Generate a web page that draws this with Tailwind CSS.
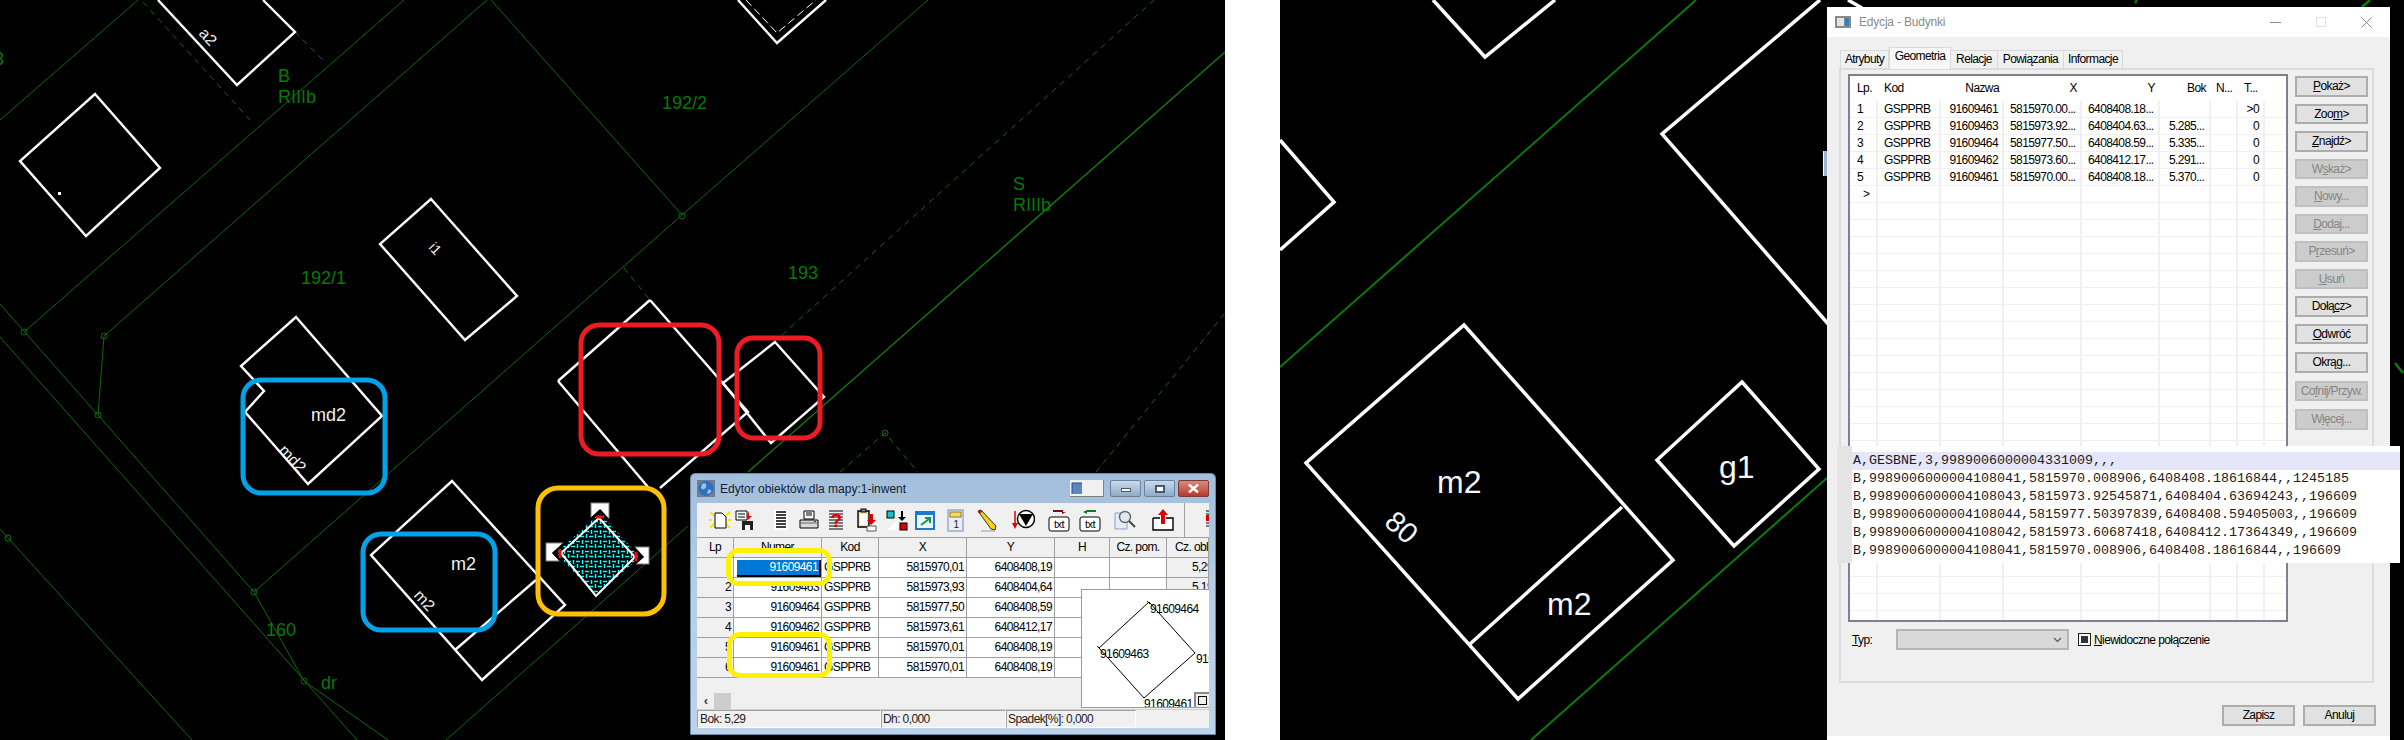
<!DOCTYPE html>
<html lang="en">
<head>
<meta charset="UTF-8" />
<title>Edycja geometrii</title>
<script src="https://cdn.jsdelivr.net/npm/@tailwindcss/browser@4"></script>
</head>
<body class="bg-white overflow-hidden">
<div class="flex w-[2404px] h-[740px] bg-white overflow-hidden font-['Liberation_Sans',sans-serif]">

  <!-- left map -->
  <div class="relative w-[1225px] h-[740px] bg-black shrink-0 overflow-hidden">
    <svg width="1225" height="740" viewBox="0 0 1225 740" class="block" font-family="Liberation Sans, sans-serif">
      <defs>
        <pattern id="hatch" width="9" height="10" patternUnits="userSpaceOnUse">
          <rect width="9" height="10" fill="#000"/>
          <path d="M0 1.5h4M6.5 0v4M4 6.5h4M1.5 4v4" stroke="#00ffff" stroke-width="1.5"/>
        </pattern>
      </defs>
      <g fill="none" stroke="#0a6a0a" stroke-width="1">
        <path d="M0 120L138 0M24 332L404 0M104 336L487 0M104 336L98 415M0 304L254 592L304 681L388 740M0 337L357 740M254 592L682 215M491 0L682 215L928 0M0 529L8 538L192 740M446 740L688 526"/>
        <path d="M748 472L1225 52" stroke="#0f7a0f" stroke-width="1.4"/>
        <path stroke-dasharray="6 5" d="M143 2L250 120M295 32L325 62M624 268L650 300M782 335L1154 0M840 472L885 433L918 472M1096 472L1225 313"/>
        <circle cx="24" cy="332" r="3"/><circle cx="104" cy="336" r="3"/><circle cx="98" cy="415" r="3"/><circle cx="254" cy="592" r="3"/>
        <circle cx="304" cy="681" r="3"/><circle cx="682" cy="216" r="3"/><circle cx="8" cy="538" r="3"/><circle cx="885" cy="433" r="3"/>
      </g>
      <g fill="none" stroke="#fff" stroke-width="2.4">
        <path d="M158 0L237 85L295 32L263 0"/>
        <path d="M95 94L160 168L86 236L20 161Z"/>
        <path d="M431 199L517 296L465 340L380 244Z"/>
        <path d="M296 317L382 416L308 484L245 412L264 391L241 366Z"/>
        <path d="M452 481L565 605L482 680L371 555ZM455 650L536 580"/>
        <path d="M650 300L748 412L660 488M558 381L650 300M558 381L648 487"/>
        <path d="M775 342L824 397L771 443L723 383Z"/>
        <path d="M738 0L777 43L826 0"/>
        <path d="M746 0L777 33L816 0" stroke-width="1" stroke-dasharray="8 4"/>
      </g>
      <rect x="58" y="192" width="3" height="3" fill="#fff"/>
      <g fill="#057a05" font-size="18">
        <text x="-6" y="65">3</text>
        <text x="278" y="82">B</text>
        <text x="278" y="103">RIIIb</text>
        <text x="662" y="109">192/2</text>
        <text x="301" y="284">192/1</text>
        <text x="788" y="279">193</text>
        <text x="1013" y="190">S</text>
        <text x="1013" y="211">RIIIb</text>
        <text x="266" y="636">160</text>
        <text x="321" y="689">dr</text>
      </g>
      <g fill="#f0f0f0" font-size="18">
        <text x="311" y="421">md2</text>
        <text x="451" y="570">m2</text>
        <text font-size="16" transform="translate(278 451) rotate(47)">md2</text>
        <text font-size="16" transform="translate(413 596) rotate(47)">m2</text>
        <text font-size="14" transform="translate(428 248) rotate(47)">i1</text>
        <text font-size="16" transform="translate(198 34) rotate(47)">a2</text>
      </g>
      <!-- selected object -->
      <rect x="591" y="503" width="18" height="17" fill="#fff" stroke="#808080"/>
      <rect x="546" y="543" width="18" height="18" fill="#fff" stroke="#808080"/>
      <rect x="632" y="547" width="17" height="17" fill="#fff" stroke="#808080"/>
      <path d="M600 511L642 557L596 598L554 553Z" fill="url(#hatch)" stroke="#000" stroke-width="3"/>
      <path d="M599 518L635 557L596 596L561 553Z" fill="none" stroke="#fff" stroke-width="2"/>
      <path d="M596 517L604 517M560 549L560 558M636 552L636 561" stroke="#e81010" stroke-width="3"/>
      <!-- hand-drawn markers -->
      <g fill="none" stroke-width="5">
        <rect x="243" y="380" width="142" height="113" rx="18" stroke="#00a2e8"/>
        <rect x="363" y="534" width="132" height="96" rx="18" stroke="#00a2e8"/>
        <rect x="581" y="325" width="138" height="129" rx="18" stroke="#ed1c24"/>
        <rect x="737" y="338" width="83" height="100" rx="16" stroke="#ed1c24"/>
        <rect x="538" y="488" width="126" height="126" rx="20" stroke="#ffc000"/>
      </g>
    </svg>

    <!-- editor window -->
    <div class="absolute left-[690px] top-[473px] w-[526px] h-[262px] rounded-t-[5px] border border-[#6d8aa6] bg-gradient-to-b from-[#a3bedb] via-[#b7cfe6] to-[#bcd3ea] px-[6px] pb-[6px] flex flex-col text-[12px] tracking-[-0.6px] text-black">
      <div class="h-[29px] shrink-0 flex items-center relative">
        <svg width="18" height="17" viewBox="0 0 18 17" class="mr-[5px]">
          <rect width="18" height="17" fill="#6b7f99"/>
          <circle cx="9" cy="8.5" r="7.5" fill="#2f6fc0"/>
          <path d="M5 4c3-2 5 0 4 3s-4 3-5 1zM11 10c2-1 4 0 3 2s-3 2-4 1z" fill="#9ac4ee"/>
        </svg>
        <span class="text-[12px] tracking-normal text-[#10202e]">Edytor obiektów dla mapy:1-inwent</span>
        <div class="ml-auto flex gap-[3px] items-center">
          <div class="w-[34px] h-[17px] mr-[3px] bg-[#f0f0f0] border-r border-b border-[#808080] flex items-center pl-[1px]">
            <svg width="12" height="13" viewBox="0 0 12 13"><rect x="1" y="1" width="10" height="11" fill="#5f86b8"/><path d="M1 12V1h10" fill="none" stroke="#1e4f96"/></svg>
          </div>
          <div class="w-[31px] h-[17px] rounded-[2px] border border-[#6d8099] bg-gradient-to-b from-[#c9dbec] to-[#8fabc8] flex items-center justify-center"><div class="w-[10px] h-[4px] mt-[3px] bg-white border border-[#4b5a6b]"></div></div>
          <div class="w-[31px] h-[17px] rounded-[2px] border border-[#6d8099] bg-gradient-to-b from-[#c9dbec] to-[#8fabc8] flex items-center justify-center"><div class="w-[10px] h-[8px] bg-white border-2 border-[#4b5a6b]"></div></div>
          <div class="w-[31px] h-[17px] rounded-[2px] border border-[#7a3b36] bg-gradient-to-b from-[#d98a7e] to-[#b53a2a] flex items-center justify-center"><svg width="11" height="9" viewBox="0 0 11 9"><path d="M1 0.5L10 8.5M10 0.5L1 8.5" stroke="#fff" stroke-width="2.4"/></svg></div>
        </div>
      </div>

      <div class="flex-1 flex flex-col bg-[#f0f0f0] relative overflow-hidden">
        <!-- toolbar -->
        <div class="h-[34px] shrink-0 flex items-center pl-[11px] relative">
          <svg width="24" height="24" viewBox="0 0 24 24"><path d="M2 4l4 4M22 4l-4 4M2 20l4-4M22 20l-4-4M1 12h3M20 12h3" stroke="#f7e400" stroke-width="2"/><path d="M7 5h7l4 4v11H7z" fill="#fff" stroke="#000"/></svg>
          <svg width="24" height="24" viewBox="0 0 24 24" class="ml-[1px]"><path d="M3 3h11v9H3z" fill="#fff" stroke="#000"/><path d="M5 6h7M5 9h7" stroke="#000"/><path d="M16 3v5h3l-4 4-1-4" fill="#e00000"/><path d="M9 13h11v9H9z" fill="#222"/><rect x="12" y="17" width="5" height="5" fill="#fff"/></svg>
          <svg width="24" height="24" viewBox="0 0 24 24" class="ml-[12px]"><rect x="5" y="2" width="14" height="20" fill="#fff"/><path d="M7 4h10M7 7h10M7 10h10M7 13h10M7 16h10M7 19h10" stroke="#000" stroke-width="1.4"/></svg>
          <svg width="24" height="24" viewBox="0 0 24 24" class="ml-[4px]"><path d="M7 3h10v8H7z" fill="#fff" stroke="#000"/><path d="M9 5h6M9 7h6" stroke="#000"/><path d="M3 12h18v8H3z" fill="#d8d8d8" stroke="#000"/><path d="M4 15h16" stroke="#666"/><rect x="17" y="13" width="2" height="1" fill="#e00000"/></svg>
          <svg width="24" height="24" viewBox="0 0 24 24" class="ml-[3px]"><path d="M5 3h14M5 6h14M5 9h14M5 12h14M5 15h14M5 18h14M5 21h14" stroke="#000"/><text x="12" y="19" text-anchor="middle" font-family="Liberation Sans" font-size="19" font-weight="700" fill="#e00000">?</text></svg>
          <svg width="24" height="24" viewBox="0 0 24 24" class="ml-[7px]"><path d="M3 3h11v16H3z" fill="#f4e68a" stroke="#000" stroke-width="1.4"/><rect x="5" y="6" width="7" height="11" fill="#fff"/><rect x="6" y="1" width="5" height="3" fill="#888" stroke="#000"/><path d="M18 6v6h3l-5 5-4-5h3V6z" fill="#e00000"/><path d="M12 18h9v5h-9z" fill="#fff" stroke="#555"/></svg>
          <svg width="24" height="24" viewBox="0 0 24 24" class="ml-[6px]"><rect x="2" y="3" width="7" height="7" fill="#12c4c4" stroke="#000"/><rect x="15" y="15" width="7" height="7" fill="#e00000" stroke="#000"/><path d="M18 3v6h3l-4 4-4-4h3V3z" fill="#000"/><path d="M2 22L13 12v10z" fill="#fff"/></svg>
          <svg width="24" height="24" viewBox="0 0 24 24" class="ml-[4px]"><rect x="2" y="3" width="20" height="19" fill="#1f78c8"/><rect x="4" y="7" width="16" height="13" fill="#eaf4fb"/><path d="M8 17l8-6M12 10h5v5" fill="none" stroke="#0f9a4a" stroke-width="2"/></svg>
          <svg width="24" height="24" viewBox="0 0 24 24" class="ml-[7px]"><rect x="4" y="2" width="15" height="21" fill="#e8eef6" stroke="#7788aa"/><rect x="6" y="4" width="11" height="5" fill="#f4d766" stroke="#8a7a20"/><text x="12" y="20" text-anchor="middle" font-family="Liberation Sans" font-size="10" fill="#222">1</text></svg>
          <svg width="24" height="24" viewBox="0 0 24 24" class="ml-[7px]"><path d="M3 3l3-1 15 16-1 4-4-1z" fill="#f2d21a" stroke="#333"/><path d="M3 3l3-1 1 2-3 2z" fill="#b01515"/><path d="M6 23h14" stroke="#999"/></svg>
          <svg width="24" height="24" viewBox="0 0 24 24" class="ml-[12px]"><path d="M4 3v15" stroke="#e00000" stroke-width="1.5"/><path d="M1 15h6l-3 6z" fill="#e00000"/><circle cx="15" cy="11" r="8.5" fill="#fff" stroke="#000" stroke-width="1.4"/><path d="M8 6h14l-7 12z" fill="#000"/></svg>
          <svg width="24" height="24" viewBox="0 0 24 24" class="ml-[12px]"><path d="M6 2h10v2h3l-4 2V4H6z" fill="#7a0f0f"/><rect x="2" y="9" width="20" height="14" rx="2" fill="#fff" stroke="#000"/><text x="12" y="20" text-anchor="middle" font-family="Liberation Sans" font-size="11" fill="#000">txt</text></svg>
          <svg width="24" height="24" viewBox="0 0 24 24" class="ml-[7px]"><path d="M9 2l-4 2 4 2V4h9V2z" fill="#0f7a1f"/><rect x="2" y="9" width="20" height="14" rx="2" fill="#fff" stroke="#000"/><text x="12" y="20" text-anchor="middle" font-family="Liberation Sans" font-size="11" fill="#000">txt</text></svg>
          <svg width="24" height="24" viewBox="0 0 24 24" class="ml-[10px]"><path d="M3 5h12v16H3z" fill="#e6edf6" stroke="#8aa0c0"/><circle cx="13" cy="9" r="5.5" fill="#dfe9f2" stroke="#666" stroke-width="1.4"/><path d="M17 13l6 6" stroke="#444" stroke-width="2"/></svg>
          <svg width="24" height="24" viewBox="0 0 24 24" class="ml-[15px]"><path d="M2 10h7M15 10h7V22H2V10" fill="#fff" stroke="#000" stroke-width="1.4"/><path d="M12 1l5 6h-3v9h-4V7H7z" fill="#e00000"/></svg>
          <div class="absolute left-[487px] top-0 h-[34px] border-l border-[#a0a0a0]"></div>
          <svg width="4" height="24" viewBox="0 0 4 24" class="absolute left-[509px] top-[5px]"><path d="M0 3h4M0 6h4M0 9h4M0 12h4M0 15h4M0 18h4" stroke="#000"/><path d="M0 7h4v6H0z" fill="#e00000"/></svg>
        </div>

        <!-- grid -->
        <div class="grid grid-cols-[37px_88px_57px_88px_88px_55px_57px_1fr] auto-rows-[20px] leading-[18px] border-t border-[#a0a0a0] [&>div]:border-r [&>div]:border-b [&>div]:border-[#a0a0a0] [&>div]:px-[2px]">
          <div class="text-center">Lp</div><div class="text-center">Numer</div><div class="text-center">Kod</div><div class="text-center">X</div><div class="text-center">Y</div><div class="text-center">H</div><div class="text-center whitespace-nowrap">Cz. pom.</div><div class="pl-[8px]! whitespace-nowrap overflow-hidden">Cz. obl</div>

          <div class="text-right"></div><div class="text-right bg-white relative"><span class="absolute left-[3px] right-0 top-[2px] bottom-0 bg-[#0078d7] border-r-2 border-b-2 border-black text-white pr-[1px] leading-[15px]">91609461</span></div><div class="bg-white">GSPPRB</div><div class="bg-white text-right">5815970,01</div><div class="bg-white text-right">6408408,19</div><div class="bg-white"></div><div class="bg-white"></div><div class="overflow-hidden whitespace-nowrap pl-[25px]!">5,29</div>
          <div class="text-right">2</div><div class="text-right bg-white">91609463</div><div class="bg-white">GSPPRB</div><div class="bg-white text-right">5815973,93</div><div class="bg-white text-right">6408404,64</div><div class="bg-white"></div><div class="bg-white"></div><div class="overflow-hidden whitespace-nowrap pl-[25px]!">5,19</div>
          <div class="text-right">3</div><div class="text-right bg-white">91609464</div><div class="bg-white">GSPPRB</div><div class="bg-white text-right">5815977,50</div><div class="bg-white text-right">6408408,59</div><div class="bg-white"></div><div class="bg-white"></div><div></div>
          <div class="text-right">4</div><div class="text-right bg-white">91609462</div><div class="bg-white">GSPPRB</div><div class="bg-white text-right">5815973,61</div><div class="bg-white text-right">6408412,17</div><div class="bg-white"></div><div class="bg-white"></div><div></div>
          <div class="text-right">5</div><div class="text-right bg-white">91609461</div><div class="bg-white">GSPPRB</div><div class="bg-white text-right">5815970,01</div><div class="bg-white text-right">6408408,19</div><div class="bg-white"></div><div class="bg-white"></div><div></div>
          <div class="text-right">6</div><div class="text-right bg-white">91609461</div><div class="bg-white">GSPPRB</div><div class="bg-white text-right">5815970,01</div><div class="bg-white text-right">6408408,19</div><div class="bg-white"></div><div class="bg-white"></div><div></div>
        </div>

        <div class="flex-1"></div>
        <!-- scrollbar -->
        <div class="h-[17px] shrink-0 flex items-center text-[#444] text-[13px] font-bold border-b border-[#cfcfcf]"><span class="w-[17px] text-center">‹</span><div class="w-[17px] h-[16px] bg-[#cdcdcd]"></div></div>
        <!-- status -->
        <div class="h-[18px] shrink-0 flex leading-[17px] text-[#222]">
          <div class="w-[184px] border border-[#a0a0a0] border-r-white border-b-white pl-[2px]">Bok: 5,29</div>
          <div class="w-[125px] border border-[#a0a0a0] border-r-white border-b-white pl-[1px]">Dh: 0,000</div>
          <div class="w-[130px] border border-[#a0a0a0] border-r-white border-b-white pl-[1px]">Spadek[%]: 0,000</div>
        </div>

        <!-- preview -->
        <div class="absolute left-[384px] top-[86px] w-[129px] h-[119px] bg-white border border-[#9a9a9a] overflow-hidden">
          <svg width="129" height="119" viewBox="0 0 129 119" class="absolute inset-0">
            <path d="M67 12L113 63L62 108L17 58Z" fill="none" stroke="#000"/>
            <path d="M65 11l3 3M15 56l3 3" stroke="#000"/>
          </svg>
          <span class="absolute left-[68px] top-[10px]">91609464</span>
          <span class="absolute left-[18px] top-[55px]">91609463</span>
          <span class="absolute left-[114px] top-[60px]">91609461</span>
          <span class="absolute left-[62px] top-[105px]">91609461</span>
          <div class="absolute right-0 bottom-0 w-[15px] h-[15px] bg-[#f0f0f0] border-l-2 border-t-2 border-[#8a8a8a] flex items-center justify-center"><div class="w-[9px] h-[9px] border border-black"></div></div>
        </div>
      </div>
    </div>

    <!-- yellow markers over the window -->
    <div class="absolute left-[726px] top-[548px] w-[106px] h-[38px] rounded-[13px] border-[5px] border-[#fff200]"></div>
    <div class="absolute left-[727px] top-[632px] w-[105px] h-[46px] rounded-[13px] border-[5px] border-[#fff200]"></div>
  </div>

  <div class="w-[55px] shrink-0"></div>

  <!-- right map -->
  <div class="relative w-[1124px] h-[740px] bg-black shrink-0 overflow-hidden">
    <svg width="1124" height="740" viewBox="1280 0 1124 740" class="block" font-family="Liberation Sans, sans-serif">
      <path d="M1280 367L1696 0M1531 740L1827 478" fill="none" stroke="#0b7a0b" stroke-width="2"/>
      <path d="M2137 0L2135 3M2370 0L2362 7M2395 363L2403 373" fill="none" stroke="#0b7a0b" stroke-width="2.5"/>
      <g fill="none" stroke="#fff" stroke-width="3.5">
        <path d="M1433 0L1485 57L1555 0"/>
        <path d="M1280 140L1334 202L1280 250"/>
        <path d="M1820 0L1662 134L1830 326"/>
        <path d="M1848 0L1862 8"/>
        <path d="M1464 325L1673 560L1518 699L1306 463ZM1622 507L1470 644"/>
        <path d="M1742 382L1819 469L1734 546L1657 460Z"/>
      </g>
      <g fill="#f4f8ff" font-size="32">
        <text x="1437" y="493">m2</text>
        <text x="1547" y="615">m2</text>
        <text x="1719" y="478">g1</text>
        <text font-size="29" transform="translate(1383 524) rotate(42)">80</text>
      </g>
    </svg>

    <div class="absolute left-[543px] top-[151px] w-[4px] h-[25px] bg-[#9fb8d6] border-l border-white"></div>

    <!-- edit dialog -->
    <div class="absolute left-[547px] top-[7px] w-[563px] h-[729px] bg-[#f0f0f0] flex flex-col text-[12px] tracking-[-0.6px] leading-[16px] text-black">
      <div class="h-[30px] shrink-0 bg-white flex items-center relative">
        <svg width="16" height="12" viewBox="0 0 16 12" class="ml-[8px] mr-[8px]"><rect width="16" height="12" fill="#8a8a8a"/><rect x="2" y="2" width="7" height="8" fill="#d8e6f2"/><rect x="10" y="2" width="4" height="8" fill="#2f7fc0"/></svg>
        <span class="text-[#8a8a8a] tracking-[-0.2px]">Edycja - Budynki</span>
        <div class="ml-auto flex items-center gap-[35px] pr-[18px] text-[#8a8a8a]">
          <div class="w-[11px] h-px bg-[#8a8a8a]"></div>
          <div class="w-[10px] h-[10px] border border-[#e0e0e0]"></div>
          <svg width="11" height="11" viewBox="0 0 11 11"><path d="M0.5 0.5L10.5 10.5M10.5 0.5L0.5 10.5" stroke="#8a8a8a"/></svg>
        </div>
      </div>

      <!-- tabs -->
      <div class="h-[31px] shrink-0 flex items-end pl-[13px] relative z-10">
        <div class="h-[18px] w-[49px] border border-b-0 border-[#d9d9d9] text-center">Atrybuty</div>
        <div class="h-[22px] w-[62px] border border-b-0 border-[#d9d9d9] bg-[#f7f7f7] text-center -mb-px">Geometria</div>
        <div class="h-[18px] w-[47px] border border-b-0 border-l-0 border-[#d9d9d9] text-center">Relacje</div>
        <div class="h-[18px] w-[66px] border border-b-0 border-l-0 border-[#d9d9d9] text-center">Powiązania</div>
        <div class="h-[18px] w-[59px] border border-b-0 border-l-0 border-[#d9d9d9] text-center">Informacje</div>
      </div>

      <!-- tab page -->
      <div class="ml-[12px] w-[535px] h-[615px] shrink-0 border-2 border-[#dcdcdc] relative">
        <div class="flex pt-[4px] pl-[7px]">
          <!-- list -->
          <div class="w-[440px] h-[548px] border-2 border-[#808090] bg-white relative overflow-hidden shrink-0">
            <div class="absolute inset-0 top-[25px] bg-[repeating-linear-gradient(to_bottom,transparent_0,transparent_16px,#f0f0f0_16px,#f0f0f0_17px)]"></div>
            <div class="absolute inset-0 top-[25px] flex [&>div]:border-r-2 [&>div]:border-[#f0f0f0] [&>div]:shrink-0">
              <div class="w-[28px]"></div><div class="w-[63px]"></div><div class="w-[63px]"></div><div class="w-[78px]"></div><div class="w-[78px]"></div><div class="w-[51px]"></div><div class="w-[27px]"></div><div class="w-[27px]"></div>
            </div>
            <div class="relative grid grid-cols-[28px_63px_63px_78px_78px_51px_27px_27px_1fr] h-[25px] leading-[25px] [&>span]:whitespace-nowrap [&>span]:overflow-hidden">
              <span class="pl-[7px]">Lp.</span><span class="pl-[6px]">Kod</span><span class="text-right pr-[5px]">Nazwa</span><span class="text-right pr-[5px]">X</span><span class="text-right pr-[5px]">Y</span><span class="text-right pr-[5px]">Bok</span><span class="pl-[5px]">N...</span><span class="pl-[6px]">T...</span><span></span>
            </div>
            <div class="relative grid grid-cols-[28px_63px_63px_78px_78px_51px_27px_27px_1fr] auto-rows-[17px]">
              <span class="pl-[7px]">1</span><span class="pl-[6px]">GSPPRB</span><span class="text-right pr-[6px]">91609461</span><span class="pl-[6px] whitespace-nowrap">5815970.00...</span><span class="pl-[6px] whitespace-nowrap">6408408.18...</span><span></span><span></span><span class="text-right pr-[6px]">&gt;0</span><span></span>
              <span class="pl-[7px]">2</span><span class="pl-[6px]">GSPPRB</span><span class="text-right pr-[6px]">91609463</span><span class="pl-[6px] whitespace-nowrap">5815973.92...</span><span class="pl-[6px] whitespace-nowrap">6408404.63...</span><span class="pl-[9px]">5.285...</span><span></span><span class="text-right pr-[6px]">0</span><span></span>
              <span class="pl-[7px]">3</span><span class="pl-[6px]">GSPPRB</span><span class="text-right pr-[6px]">91609464</span><span class="pl-[6px] whitespace-nowrap">5815977.50...</span><span class="pl-[6px] whitespace-nowrap">6408408.59...</span><span class="pl-[9px]">5.335...</span><span></span><span class="text-right pr-[6px]">0</span><span></span>
              <span class="pl-[7px]">4</span><span class="pl-[6px]">GSPPRB</span><span class="text-right pr-[6px]">91609462</span><span class="pl-[6px] whitespace-nowrap">5815973.60...</span><span class="pl-[6px] whitespace-nowrap">6408412.17...</span><span class="pl-[9px]">5.291...</span><span></span><span class="text-right pr-[6px]">0</span><span></span>
              <span class="pl-[7px]">5</span><span class="pl-[6px]">GSPPRB</span><span class="text-right pr-[6px]">91609461</span><span class="pl-[6px] whitespace-nowrap">5815970.00...</span><span class="pl-[6px] whitespace-nowrap">6408408.18...</span><span class="pl-[9px]">5.370...</span><span></span><span class="text-right pr-[6px]">0</span><span></span>
              <span class="pl-[13px]">&gt;</span>
            </div>
          </div>

          <!-- buttons -->
          <div class="ml-[7px] mt-[2px] w-[73px] flex flex-col gap-[7px] [&>div]:h-[20.5px] [&>div]:border-2 [&>div]:text-center [&>div]:leading-[16px]">
            <div class="bg-[#e1e1e1] border-[#adadad]"><u>P</u>okaż&gt;</div>
            <div class="bg-[#e1e1e1] border-[#adadad]">Zoo<u>m</u>&gt;</div>
            <div class="bg-[#e1e1e1] border-[#adadad]"><u>Z</u>najdź&gt;</div>
            <div class="bg-[#cccccc] border-[#bfbfbf] text-[#858585]">W<u>s</u>każ&gt;</div>
            <div class="bg-[#cccccc] border-[#bfbfbf] text-[#858585]"><u>N</u>owy...</div>
            <div class="bg-[#cccccc] border-[#bfbfbf] text-[#858585]"><u>D</u>odaj...</div>
            <div class="bg-[#cccccc] border-[#bfbfbf] text-[#858585]">P<u>r</u>zesuń&gt;</div>
            <div class="bg-[#cccccc] border-[#bfbfbf] text-[#858585]"><u>U</u>suń</div>
            <div class="bg-[#e1e1e1] border-[#adadad]">Dołą<u>c</u>z&gt;</div>
            <div class="bg-[#e1e1e1] border-[#adadad]"><u>O</u>dwróć</div>
            <div class="bg-[#e1e1e1] border-[#adadad] mt-[1px]">Okrą<u>g</u>...</div>
            <div class="bg-[#cccccc] border-[#bfbfbf] text-[#858585] mt-[1px]">Co<u>f</u>nij/Przyw.</div>
            <div class="bg-[#cccccc] border-[#bfbfbf] text-[#858585] mt-[1px]">W<u>i</u>ęcej...</div>
          </div>
        </div>

        <!-- type row -->
        <div class="flex items-center pl-[11px] mt-[7px] h-[21px]">
          <span class="w-[44px]"><u>T</u>yp:</span>
          <div class="w-[173px] h-[21px] bg-[#d9d9d9] border-2 border-[#b5b5b5] flex items-center justify-end pr-[5px]">
            <svg width="9" height="6" viewBox="0 0 9 6"><path d="M1 1l3.5 3.5L8 1" fill="none" stroke="#555" stroke-width="1.2"/></svg>
          </div>
          <div class="ml-[9px] w-[13px] h-[13px] border border-[#222] bg-white p-[2px]"><div class="w-full h-full bg-[#333]"></div></div>
          <span class="ml-[3px]"><u>N</u>iewidoczne połączenie</span>
        </div>
      </div>

      <!-- footer -->
      <div class="flex justify-end gap-[8px] pr-[14px] mt-[22px]">
        <div class="w-[73px] h-[21px] bg-[#e1e1e1] border-2 border-[#adadad] text-center leading-[16px]">Zapisz</div>
        <div class="w-[73px] h-[21px] bg-[#e1e1e1] border-2 border-[#adadad] text-center leading-[16px]">Anuluj</div>
      </div>
    </div>
    <div class="absolute left-[547px] top-[736px] w-[563px] h-[4px] bg-white"></div>

    <!-- pasted text over the dialog -->
    <div class="absolute left-[557px] top-[446px] w-[563px] h-[117px] flex">
      <div class="w-[15px] bg-[#e4e4e4] shrink-0"></div>
      <div class="flex-1 bg-white pt-[6px] font-['Liberation_Mono',monospace] text-[13.33px] leading-[18px] text-[#1c1c1c] [&>div]:pl-[1px] [&>div]:whitespace-nowrap">
        <div class="bg-[#e6e6fa]">A,GESBNE,3,9989006000004331009,,,</div>
        <div>B,9989006000004108041,5815970.008906,6408408.18616844,,1245185</div>
        <div>B,9989006000004108043,5815973.92545871,6408404.63694243,,196609</div>
        <div>B,9989006000004108044,5815977.50397839,6408408.59405003,,196609</div>
        <div>B,9989006000004108042,5815973.60687418,6408412.17364349,,196609</div>
        <div>B,9989006000004108041,5815970.008906,6408408.18616844,,196609</div>
      </div>
    </div>
  </div>
</div>
</body>
</html>
